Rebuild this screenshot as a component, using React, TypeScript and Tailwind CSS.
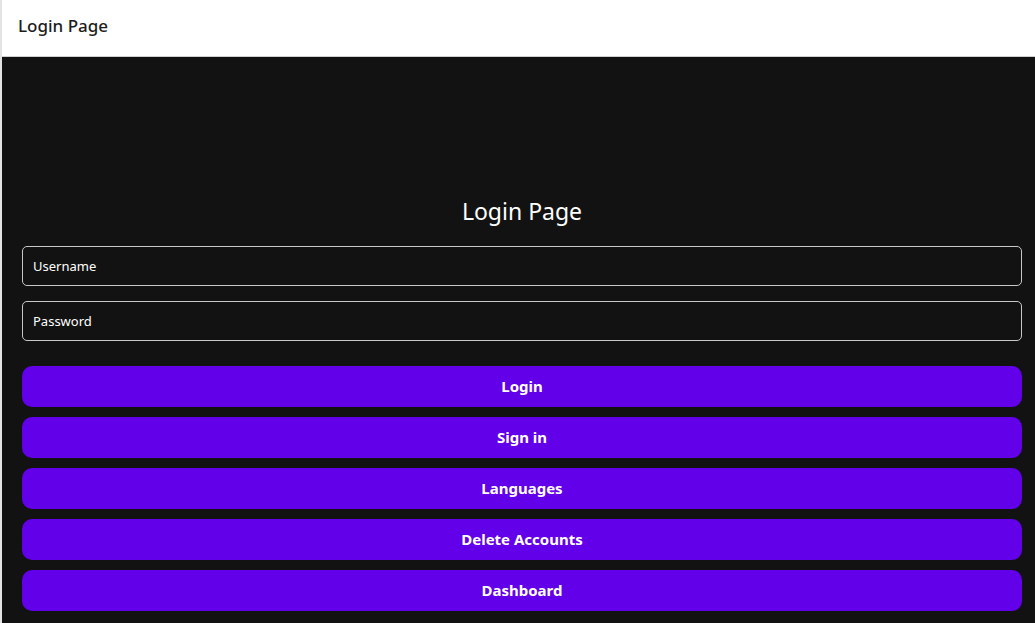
const buttons = ["Login", "Sign in", "Languages", "Delete Accounts", "Dashboard"];

export default function App() {
  return (
    <div className="h-[623px] overflow-hidden border-l-2 border-[#e3e3e3] bg-[#121212] font-['Noto_Sans',sans-serif]">
      <header className="flex h-[57px] items-center border-b border-[#d0d0d0] bg-white px-4 pb-[4px]">
        <h1 className="text-[17px] font-medium text-[#1c1c1c]">Login Page</h1>
      </header>

      <main className="pt-[139px] pl-5 pr-[13px]">
        <h2 className="mb-[20px] text-center text-[23px] leading-[30px] text-white">Login Page</h2>

        <div className="flex flex-col gap-[15px]">
          <input
            placeholder="Username"
            className="h-10 rounded-[5px] border border-[#c8c8c8] bg-transparent px-[10px] text-[13px] text-white placeholder:text-white outline-none"
          />
          <input
            type="password"
            placeholder="Password"
            className="h-10 rounded-[5px] border border-[#c8c8c8] bg-transparent px-[10px] text-[13px] text-white placeholder:text-white outline-none"
          />
        </div>

        <div className="mt-[25px] flex flex-col gap-[10px]">
          {buttons.map((label) => (
            <button
              key={label}
              className="h-[41px] rounded-[10px] bg-[#6200ea] text-[15px] font-bold text-white"
            >
              {label}
            </button>
          ))}
        </div>
      </main>
    </div>
  );
}
